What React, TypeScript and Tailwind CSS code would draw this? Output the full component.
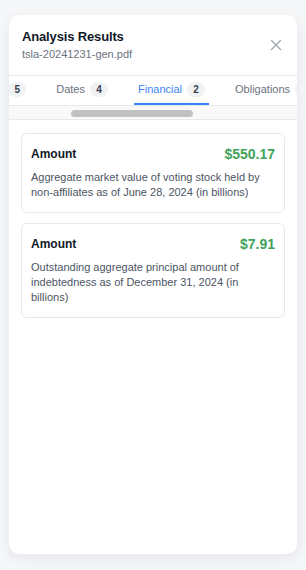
import { useLayoutEffect, useRef } from 'react';

const TABS = [
  { key: 'parties',     label: 'Parties',     count: 5 },
  { key: 'dates',       label: 'Dates',       count: 4 },
  { key: 'financial',   label: 'Financial',   count: 2 },
  { key: 'obligations', label: 'Obligations', count: 6 },
  { key: 'risks',       label: 'Risks',       count: 3 },
];

const ITEMS = [
  {
    label: 'Amount',
    value: '$550.17',
    text:  'Aggregate market value of voting stock held by non-affiliates as of June 28, 2024 (in billions)',
  },
  {
    label: 'Amount',
    value: '$7.91',
    text:  'Outstanding aggregate principal amount of indebtedness as of December 31, 2024 (in billions)',
  },
];

const ACTIVE = 'financial';

export default function App() {
  const stripRef = useRef<HTMLDivElement>(null);
  const datesRef = useRef<HTMLButtonElement>(null);

  // the tab strip is scrolled so that "Dates" sits near the left edge
  useLayoutEffect(() => {
    if (stripRef.current && datesRef.current) {
      stripRef.current.scrollLeft = datesRef.current.offsetLeft - 43;
    }
  }, []);

  return (
    <div
      className="h-screen px-[9px] pt-[15px] pb-[16px] bg-[#f6f7f9]"
      style={{ fontFamily: '"Liberation Sans", Arial, sans-serif' }}
    >
      <div className="h-full flex flex-col bg-white rounded-[10px] shadow-[0_4px_14px_rgba(17,24,39,0.08)] overflow-hidden">
        {/* Header */}
        <header className="flex items-center justify-between px-[13px] pt-3 pb-[13px] border-b border-[#e5e7eb]">
          <div className="flex flex-col">
            <h1 className="text-[13px] leading-[19px] font-bold tracking-[-0.15px] text-[#111827]">
              Analysis Results
            </h1>
            <span className="text-[11px] leading-4 text-[#6b7280]">tsla-20241231-gen.pdf</span>
          </div>
          <button className="mr-[2px] text-[#9ca3af]" aria-label="Close">
            <svg width="12" height="12" viewBox="0 0 12 12" fill="none" stroke="currentColor" strokeWidth="1.3" strokeLinecap="round">
              <path d="M1.5 1.5l9 9M10.5 1.5l-9 9" />
            </svg>
          </button>
        </header>

        {/* Tabs */}
        <div ref={stripRef} className="relative flex gap-[22px] overflow-hidden whitespace-nowrap border-b border-[#e5e7eb]">
          {TABS.map((t) => {
            const active = t.key === ACTIVE;
            return (
              <button
                key={t.key}
                ref={t.key === 'dates' ? datesRef : undefined}
                className={
                  active
                    ? 'shrink-0 flex items-center gap-[5px] h-[29px] px-1 border-b-2 border-[#3b82f6] text-[11px] text-[#3b82f6]'
                    : 'shrink-0 flex items-center gap-[5px] h-[29px] px-1 border-b-2 border-transparent text-[11px] text-[#6b7280]'
                }
              >
                <span>{t.label}</span>
                <span className="flex items-center justify-center min-w-[18px] h-[15px] px-[5px] rounded-full bg-[#f1f2f4] text-[10px] font-bold text-[#374151]">
                  {t.count}
                </span>
              </button>
            );
          })}
        </div>

        {/* Scrollbar of the tab strip */}
        <div className="h-[14px] pt-[4px] bg-[#f9f9f9] border-b border-[#e9e9e9]">
          <div className="ml-[62px] w-[122px] h-[7px] rounded-full bg-[#c1c1c1]" />
        </div>

        {/* Results */}
        <div className="flex-1 flex flex-col gap-[10px] px-3 pt-[13px]">
          {ITEMS.map((it, i) => (
            <div key={i} className="border border-[#e5e7eb] rounded-md px-[9px] pt-[10px] pb-[12px]">
              <div className="flex items-center justify-between h-5">
                <span className="text-[12px] font-bold text-[#111827]">{it.label}</span>
                <span className="text-[14px] font-bold text-[#41a35a]">{it.value}</span>
              </div>
              <p className="mt-[6px] text-[11px] leading-[15px] text-[#4b5563]">{it.text}</p>
            </div>
          ))}
        </div>
      </div>
    </div>
  );
}
